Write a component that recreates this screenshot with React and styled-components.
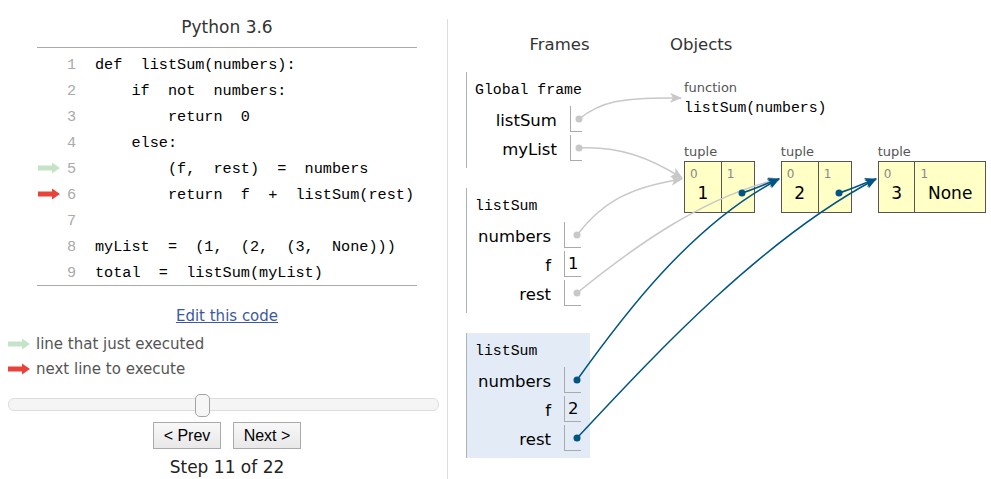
import styled, { createGlobalStyle } from 'styled-components';

const GlobalStyle = createGlobalStyle`
  body {
    margin: 0;
    background: #fff;
    font-family: 'DejaVu Sans', Verdana, sans-serif;
    color: #000;
  }
`;

const MONO = `'Liberation Mono', 'DejaVu Sans Mono', monospace`;

const codeLines = [
  'def  listSum(numbers):',
  '    if  not  numbers:',
  '        return  0',
  '    else:',
  '        (f,  rest)  =  numbers',
  '        return  f  +  listSum(rest)',
  '',
  'myList  =  (1,  (2,  (3,  None)))',
  'total  =  listSum(myList)',
];

const frames = [
  {
    title: 'Global frame',
    vars: [
      { name: 'listSum', ptr: true },
      { name: 'myList', ptr: true },
    ],
  },
  {
    title: 'listSum',
    vars: [
      { name: 'numbers', ptr: true },
      { name: 'f', value: '1' },
      { name: 'rest', ptr: true },
    ],
  },
  {
    title: 'listSum',
    active: true,
    vars: [
      { name: 'numbers', ptr: true },
      { name: 'f', value: '2' },
      { name: 'rest', ptr: true },
    ],
  },
];

const tuples = [
  ['1', null],
  ['2', null],
  ['3', 'None'],
];

const GREEN = '#c5e4c7';
const RED = '#e8433a';
const GRAY = '#c8c8c8';
const BLUE = '#005583';

const Page = styled.div`
  position: relative;
  display: flex;
  align-items: flex-start;
  width: 991px;
  height: 479px;
  overflow: hidden;
`;

const CodePane = styled.div`
  width: 447px;
  flex: none;
  display: flex;
  flex-direction: column;
`;

const Centered = styled.div`
  margin-left: 37px;
  width: 380px;
`;

const Title = styled.div`
  height: 48px;
  box-sizing: border-box;
  padding-top: 7px;
  display: flex;
  align-items: center;
  justify-content: center;
  border-bottom: 1px solid #aaa;
  font-size: 17px;
  color: #333;
`;

const CodeBlock = styled.div`
  padding-top: 3px;
  border-bottom: 1px solid #aaa;
`;

const CodeRow = styled.div`
  display: grid;
  grid-template-columns: 28px 11px 1fr;
  height: 26px;
  box-sizing: border-box;
  padding-top: 2px;
  align-items: center;
  font-family: ${MONO};
  font-size: 15.2px;
`;

const Gutter = styled.div`
  padding-left: 1px;
  margin-top: -2px;
  display: flex;
  align-items: center;
`;

const LineNo = styled.span`
  text-align: right;
  color: #aaa;
`;

const CodeText = styled.span`
  padding-left: 19px;
  white-space: pre;
  color: #000;
`;

const EditLink = styled.a`
  display: block;
  margin-top: 20px;
  line-height: 20px;
  text-align: center;
  font-size: 15px;
  color: #3d58a2;
  text-decoration: underline;
`;

const Legend = styled.div`
  margin: 5px 0 0 8px;
`;

const LegendRow = styled.div`
  display: flex;
  align-items: center;
  gap: 6px;
  height: 25px;
  font-size: 15px;
  color: #555;
`;

const Track = styled.div`
  position: relative;
  margin: 17px 8px 0 8px;
  height: 13px;
  box-sizing: border-box;
  border: 1px solid #ddd;
  border-radius: 6px;
  background: #f5f5f5;
`;

const Handle = styled.div`
  position: absolute;
  top: -5px;
  left: ${(p) => p.$left}px;
  width: 15px;
  height: 23px;
  box-sizing: border-box;
  border: 1px solid #a3a3a3;
  border-radius: 5px;
  background: #f6f6f6;
`;

const ButtonRow = styled.div`
  display: flex;
  justify-content: center;
  gap: 12px;
  margin-top: 11px;
`;

const NavButton = styled.button`
  width: 68px;
  height: 27px;
  padding: 0;
  border: 1px solid #aaa;
  border-radius: 0;
  background: linear-gradient(#f8f8f8, #e8e8e8);
  font-family: 'Liberation Sans', Arial, sans-serif;
  font-size: 16px;
  color: #000;
`;

const StepText = styled.div`
  margin-top: 8px;
  line-height: 20px;
  text-align: center;
  font-size: 17px;
  color: #222;
`;

const VizPane = styled.div`
  flex: 1;
  display: flex;
  align-items: flex-start;
  margin-top: 19px;
  height: 460px;
  border-left: 1px solid #ddd;
  padding-left: 18px;
`;

const ColumnHeader = styled.div`
  padding-top: 16px;
  line-height: 20px;
  font-size: 16.5px;
  color: #333;
  text-align: ${(p) => (p.$center ? 'center' : 'left')};
`;

const FramesColumn = styled.div`
  width: 187px;
  flex: none;
`;

const FrameList = styled.div`
  margin-top: 17px;
`;

const Frame = styled.div`
  width: fit-content;
  padding: 4px 9px 7px 8px;
  margin-bottom: 20px;
  border-left: 1px solid #a8b4b7;
  background: ${(p) => (p.$active ? '#e2ebf6' : '#fff')};
`;

const FrameTitle = styled.div`
  height: 26px;
  line-height: 28px;
  font-family: ${MONO};
  font-size: 14.85px;
  white-space: pre;
`;

const VarGrid = styled.div`
  display: grid;
  grid-template-columns: auto auto;
  grid-auto-rows: 26px;
  row-gap: 3px;
  margin-top: 4px;
  justify-content: end;
  font-size: 16.5px;
`;

const VarName = styled.div`
  padding: 2px 13px 0 3px;
  line-height: 25px;
  text-align: right;
`;

const VarValue = styled.div`
  box-sizing: border-box;
  min-width: 12px;
  padding: 1px 2px 0 3px;
  line-height: 24px;
  border-left: 1px solid #aaa;
  border-bottom: 1px solid #aaa;
`;

const ObjectsColumn = styled.div`
  padding-left: 17px;
`;

const Heap = styled.div`
  margin-left: 14px;
`;

const TypeLabel = styled.div`
  font-size: 13px;
  line-height: 17px;
  height: 16px;
  color: #555;
`;

const FuncObject = styled.div`
  margin-top: 24px;
`;

const FuncSig = styled.div`
  margin-top: 2px;
  line-height: 22px;
  height: 20px;
  font-family: ${MONO};
  font-size: 14.85px;
  white-space: pre;
`;

const TupleRow = styled.div`
  display: flex;
  align-items: flex-start;
  gap: 26px;
  margin-top: 26px;
`;

const TupleBox = styled.div`
  display: flex;
  margin-top: 2px;
  border: 1px solid #555;
  background: #ffffc6;
`;

const TupleCell = styled.div`
  box-sizing: border-box;
  min-width: 33px;
  padding: 5px 5px 7px;
  & + & {
    border-left: 1px solid #555;
  }
`;

const CellIndex = styled.div`
  font-size: 12px;
  line-height: 14px;
  color: #888;
`;

const CellValue = styled.div`
  padding: 0 7.5px;
  height: 24px;
  line-height: 25px;
  text-align: center;
  font-size: 17px;
`;

const Overlay = styled.svg`
  position: absolute;
  top: 0;
  left: 0;
  pointer-events: none;
`;

const ArrowIcon = ({ color }) => (
  <svg width="22" height="12" viewBox="0 0 22 12" style={{ display: 'block' }}>
    <path d="M0 3.5H14V0.5L22 6L14 11.5V8.5H0Z" fill={color} />
  </svg>
);

// connectors drawn over the frames/heap, like the jsPlumb layer
const links = [
  { d: 'M579 119 C600 102 620 97 681 98', c: 'gray' },
  { d: 'M579 148 C620 146 650 158 682 178', c: 'gray' },
  { d: 'M577 235 C600 205 625 188 682 179', c: 'gray' },
  { d: 'M577 293 C630 250 700 198 779 179', c: 'gray' },
  { d: 'M742 193 C755 189 765 184 779 179', c: 'blue' },
  { d: 'M839 193 C852 189 862 184 876 179', c: 'blue' },
  { d: 'M577 380 C620 320 690 225 779 179', c: 'blue' },
  { d: 'M577 438 C650 360 760 240 876 179', c: 'blue' },
];

const dots = [
  [579, 119, GRAY],
  [579, 148, GRAY],
  [577, 235, GRAY],
  [577, 293, GRAY],
  [742, 193, BLUE],
  [839, 193, BLUE],
  [577, 380, BLUE],
  [577, 438, BLUE],
];

const Connectors = () => (
  <Overlay width="991" height="479" viewBox="0 0 991 479">
    <defs>
      {[
        ['gray', GRAY],
        ['blue', BLUE],
      ].map(([id, col]) => (
        <marker
          key={id}
          id={`head-${id}`}
          viewBox="0 0 12 10"
          refX="11"
          refY="5"
          markerWidth="12"
          markerHeight="10"
          markerUnits="userSpaceOnUse"
          orient="auto"
        >
          <path d="M0 0 L12 5 L0 10 L3 5 Z" fill={col} />
        </marker>
      ))}
    </defs>
    {links.map((l, i) => (
      <path
        key={i}
        d={l.d}
        fill="none"
        stroke={l.c === 'gray' ? GRAY : BLUE}
        strokeWidth="1.5"
        markerEnd={`url(#head-${l.c})`}
      />
    ))}
    {dots.map(([x, y, col], i) => (
      <circle key={i} cx={x} cy={y} r="3.5" fill={col} />
    ))}
  </Overlay>
);

const App = () => {
  const step = 11;
  const total = 22;

  return (
    <Page>
      <GlobalStyle />
      <CodePane>
        <Centered>
          <Title>Python 3.6</Title>
          <CodeBlock>
            {codeLines.map((line, i) => (
              <CodeRow key={i}>
                <Gutter>
                  {i === 4 && <ArrowIcon color={GREEN} />}
                  {i === 5 && <ArrowIcon color={RED} />}
                </Gutter>
                <LineNo>{i + 1}</LineNo>
                <CodeText>{line}</CodeText>
              </CodeRow>
            ))}
          </CodeBlock>
          <EditLink href="#">Edit this code</EditLink>
        </Centered>

        <Legend>
          <LegendRow>
            <ArrowIcon color={GREEN} />
            line that just executed
          </LegendRow>
          <LegendRow>
            <ArrowIcon color={RED} />
            next line to execute
          </LegendRow>
        </Legend>

        <Track>
          <Handle $left={186} />
        </Track>

        <Centered>
          <ButtonRow>
            <NavButton>&lt; Prev</NavButton>
            <NavButton>Next &gt;</NavButton>
          </ButtonRow>
          <StepText>
            Step {step} of {total}
          </StepText>
        </Centered>
      </CodePane>

      <VizPane>
        <FramesColumn>
          <ColumnHeader $center>Frames</ColumnHeader>
          <FrameList>
            {frames.map((f, i) => (
              <Frame key={i} $active={f.active}>
                <FrameTitle>{f.title}</FrameTitle>
                <VarGrid>
                  {f.vars.map((v) => [
                    <VarName key={v.name + 'n'}>{v.name}</VarName>,
                    <VarValue key={v.name + 'v'}>{v.ptr ? '' : v.value}</VarValue>,
                  ])}
                </VarGrid>
              </Frame>
            ))}
          </FrameList>
        </FramesColumn>

        <ObjectsColumn>
          <ColumnHeader>Objects</ColumnHeader>
          <Heap>
            <FuncObject>
              <TypeLabel>function</TypeLabel>
              <FuncSig>listSum(numbers)</FuncSig>
            </FuncObject>
            <TupleRow>
              {tuples.map((t, i) => (
                <div key={i}>
                  <TypeLabel>tuple</TypeLabel>
                  <TupleBox>
                    {t.map((val, j) => (
                      <TupleCell key={j}>
                        <CellIndex>{j}</CellIndex>
                        <CellValue>{val}</CellValue>
                      </TupleCell>
                    ))}
                  </TupleBox>
                </div>
              ))}
            </TupleRow>
          </Heap>
        </ObjectsColumn>
      </VizPane>

      <Connectors />
    </Page>
  );
};

export default App;
